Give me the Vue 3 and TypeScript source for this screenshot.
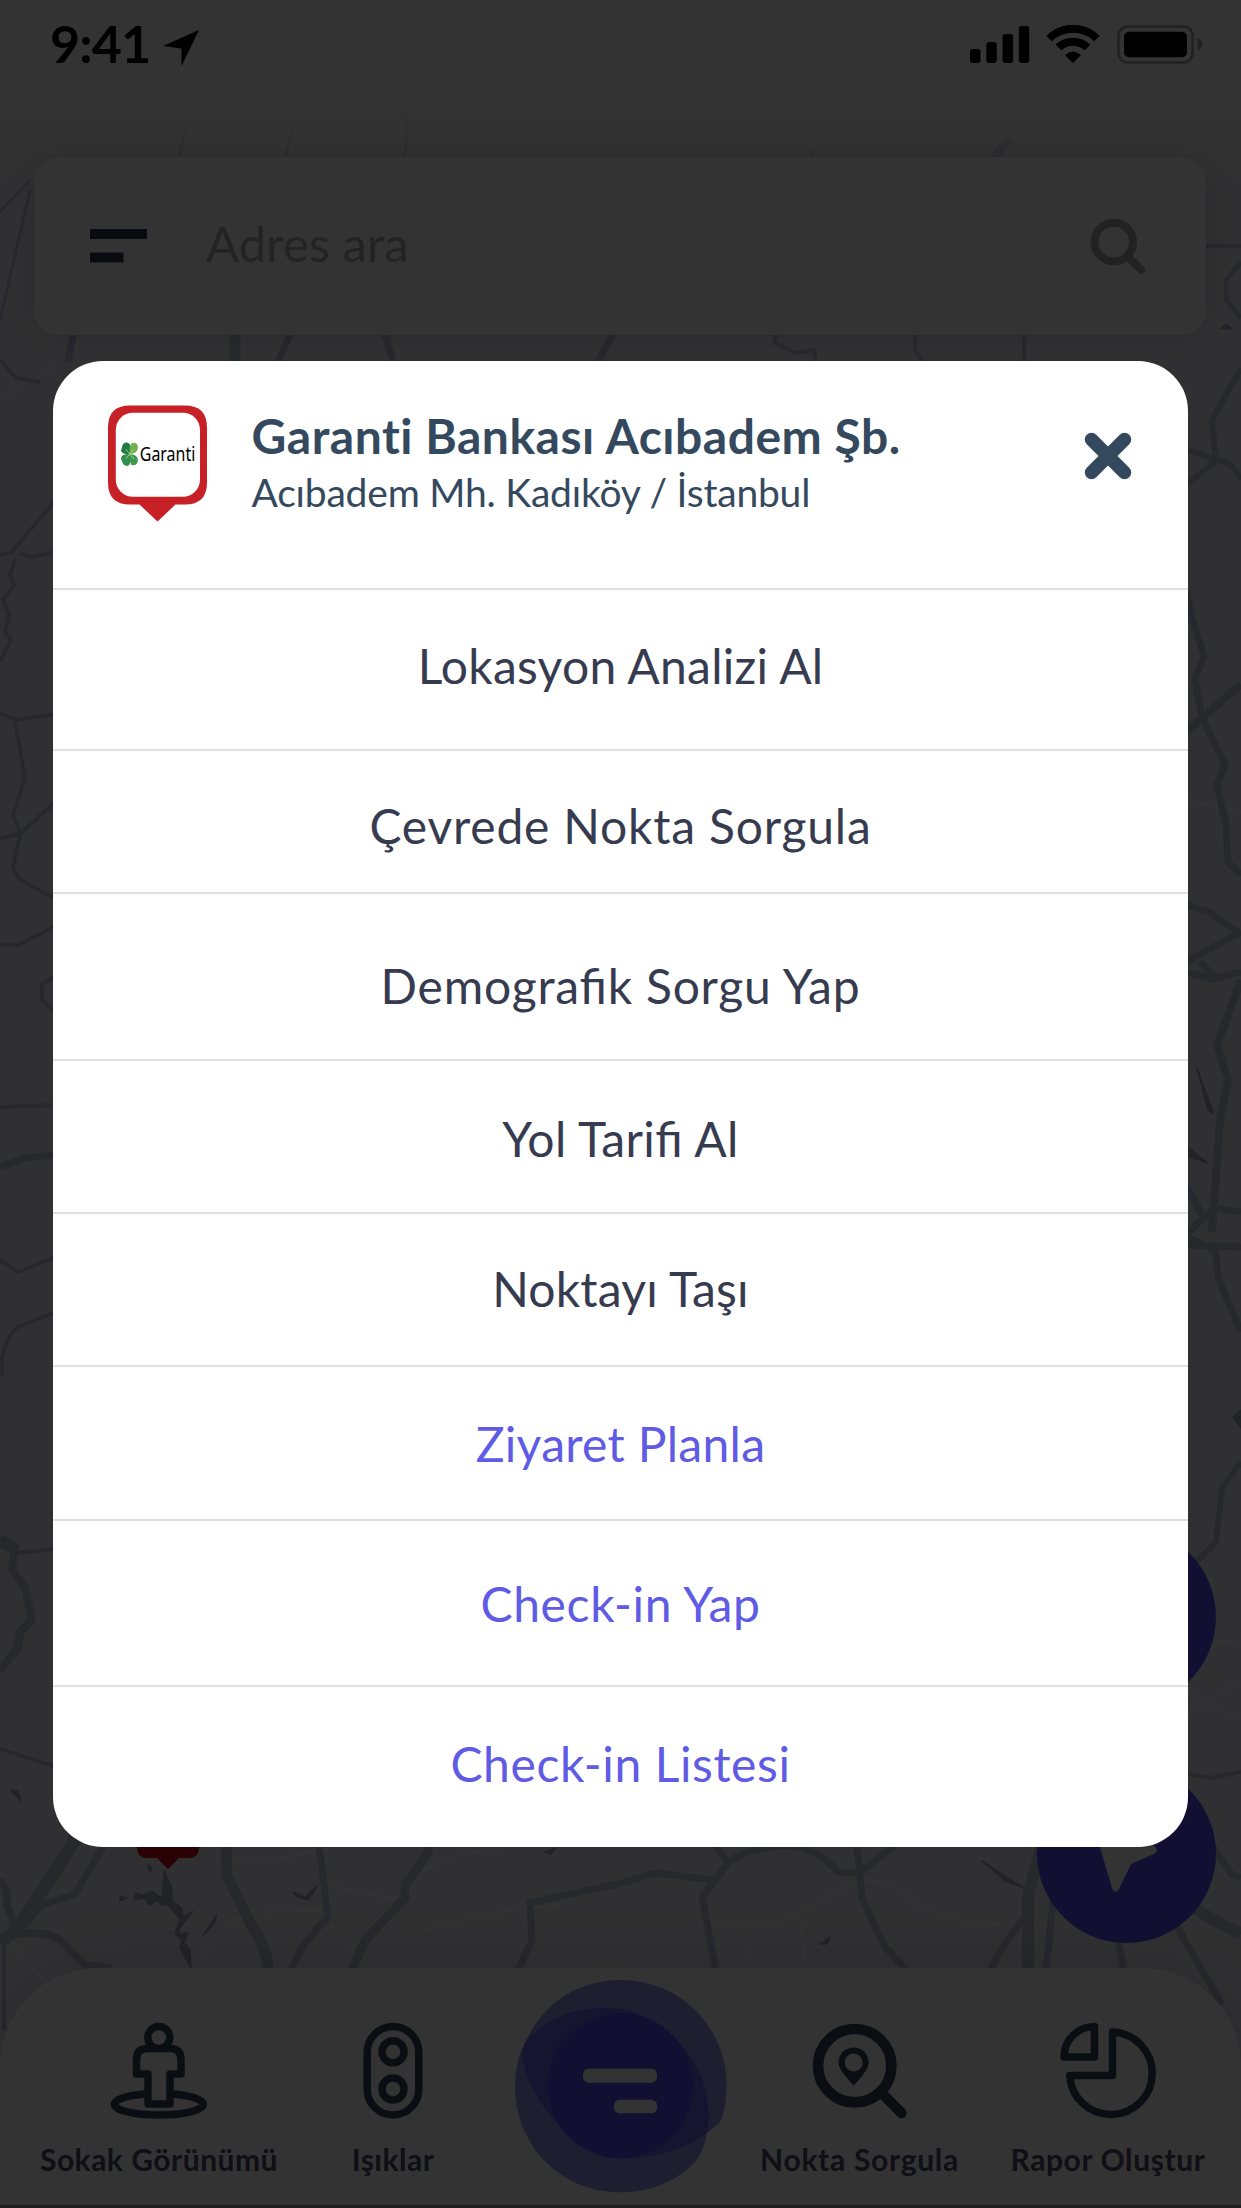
<script setup lang="ts">
interface Action {
  label: string
  height: number
  padTop: number
  spacing: number
  accent?: boolean
}

interface Road {
  d: string
  w: number
}

const actions: Action[] = [
  { label: 'Lokasyon Analizi Al', height: 161, padTop: 46.5, spacing: 0.25 },
  { label: 'Çevrede Nokta Sorgula', height: 143, padTop: 45.5, spacing: 0.8 },
  { label: 'Demografik Sorgu Yap', height: 167, padTop: 62.5, spacing: 0.76 },
  { label: 'Yol Tarifi Al', height: 153, padTop: 48.5, spacing: 0.4 },
  { label: 'Noktayı Taşı', height: 153, padTop: 46, spacing: 0.2 },
  { label: 'Ziyaret Planla', height: 154, padTop: 48, spacing: 0.3, accent: true },
  { label: 'Check-in Yap', height: 166, padTop: 54, spacing: 0.65, accent: true },
  { label: 'Check-in Listesi', height: 162, padTop: 47.5, spacing: 0.6, accent: true },
]

const roads: Road[] = [
  { d: 'M0 555L12 552L56 499M20 553L32 557L56 552', w: 4 },
  { d: 'M16 558L10 575L14 585L3 600L9 615L5 632L11 640L0 662', w: 4 },
  { d: 'M0 713L17 720L56 714M15 722L25 778L13 815L20 832M0 838L20 834L56 801', w: 4 },
  { d: 'M20 835L13 867L20 880L56 899M0 945L18 945L56 926', w: 4 },
  { d: 'M56 975L42 985L42 1000L56 1013M0 1107L56 1105', w: 4 },
  { d: 'M0 1167L25 1158L56 1155', w: 7 },
  { d: 'M0 1260L18 1272L56 1257M2 1377L2 1358Q8 1332 20 1326L56 1312', w: 4 },
  { d: 'M0 1538L15 1547L12 1570L25 1588L32 1620L20 1632L18 1648L0 1670', w: 8 },
  { d: 'M0 1545L15 1553L56 1549M0 1749L56 1767', w: 4 },
  { d: 'M1206 246L1241 246M1241 262L1226 280L1226 300L1241 318', w: 5 },
  { d: 'M1241 368L1212 420L1216 460M1186 449L1216 460Q1232 460 1241 480M1186 485L1216 461', w: 6 },
  { d: 'M1186 590L1192 618L1204 655L1195 680L1202 718L1225 765L1217 785L1226 825L1228 862L1241 875', w: 7 },
  { d: 'M1186 732L1241 684', w: 8 },
  { d: 'M1186 905L1210 912L1241 935M1186 962L1241 932M1200 962L1216 978L1241 972M1186 972L1216 980', w: 7 },
  { d: 'M1241 980L1217 1045L1228 1080L1220 1120L1212 1232', w: 8 },
  { d: 'M1186 1185L1202 1215M1186 1234L1215 1208L1241 1212M1186 1245L1241 1247M1186 1237L1215 1250L1218 1278L1241 1332', w: 7 },
  { d: 'M1241 1462L1222 1488L1216 1542L1196 1562', w: 6 },
  { d: 'M1186 1774L1210 1778L1241 1772', w: 4 },
  { d: 'M74 330L68 362M290 334L278 362M385 334L393 362M613 334L598 362', w: 7 },
  { d: 'M235 334L235 362', w: 11 },
  { d: 'M775 334L775 343L795 353L815 350L815 362M915 334L915 350L924 362M1024 334L1024 362M40 382L16 378L0 360', w: 4 },
  { d: 'M30 190L0 320M188 125L178 158M292 130L285 158M408 110L405 158M812 150L814 158M0 212L30 180', w: 3 },
  { d: 'M995 158Q1002 145 1010 140', w: 9 },
  { d: 'M78 1835L18 1929L0 1942', w: 13 },
  { d: 'M104 1845L75 1894L42 1905L18 1932', w: 7 },
  { d: 'M0 1880Q8 1888 7 1905L16 1930M18 1934Q48 1930 62 1942L85 1965L112 1969', w: 8 },
  { d: 'M4 1935L4 2030', w: 4 },
  { d: 'M226 1845L227 1876L250 1922Q268 1950 268 1970', w: 11 },
  { d: 'M319 1845L324 1885L328 1917Q296 1950 292 1970', w: 7 },
  { d: 'M430 1845Q425 1862 405 1884L405 1898L365 1940L352 1970', w: 9 },
  { d: 'M620 1883L530 1903L532 1940L518 1970', w: 7 },
  { d: 'M612 1886L655 1873L715 1880L728 1862L715 1845M728 1862Q760 1842 800 1847Q820 1852 838 1872L860 1873L894 1846', w: 7 },
  { d: 'M722 1872L702 1897L716 1970M857 1845L862 1898L872 1920L885 1947L907 1970', w: 7 },
  { d: 'M1042 1845L1028 1895L1028 1970', w: 12 },
  { d: 'M1053 1900L1046 1970M1024 1918L1002 1948L990 1970', w: 7 },
  { d: 'M1212 1845L1232 1875L1241 1878M1118 1940L1124 1970M1172 1918L1222 2005', w: 7 },
  { d: 'M1190 1905L1210 1918L1241 1934', w: 12 },
]

const faintRoads =
  'M0 400L56 366M230 1858L280 1858L330 1848M200 1960Q210 1930 255 1910M265 1912L330 1910M330 1886L400 1900M330 1925L358 1955M410 1880Q450 1850 500 1850M400 1940Q480 1910 560 1905M710 1922L780 1922Q840 1890 860 1880Q900 1880 910 1900Q950 1925 1000 1924M800 1920L806 1968M750 1925L750 1968M1186 1645L1241 1640M1186 1690L1241 1720M1186 1716L1241 1680M1186 800L1241 812M10 1940L60 2000'
</script>

<template>
  <div class="screen">
    <svg class="map" viewBox="0 0 1241 2208" aria-hidden="true">
      <defs>
        <linearGradient id="topFade" x1="0" y1="0" x2="0" y2="1">
          <stop offset="0.5" stop-color="#fff" />
          <stop offset="1" stop-color="#fff" stop-opacity="0" />
        </linearGradient>
      </defs>
      <rect width="1241" height="2208" fill="#f0f0f7" />
      <path :d="faintRoads" fill="none" stroke="#fafafa" stroke-width="3" />
      <g fill="none" stroke="#c3c6d6" stroke-linejoin="round">
        <path v-for="(road, i) in roads" :key="i" :d="road.d" :stroke-width="road.w" />
      </g>
      <g fill="#aaadb8" stroke="#aaadb8" stroke-width="1.500" stroke-linejoin="round">
        <path d="M164 1871L172 1888L172 1900L182 1908L183 1917L193 1911L180 1928L178 1934L188 1933L184 1942L190 1950L191 1968L180 1948L182 1940L175 1934L180 1920L168 1905L161 1905L158 1900L150 1905L144 1898L134 1900L135 1893L144 1895L152 1891L162 1898Z" />
        <path d="M120 1896L127 1898L120 1901ZM147 1864L152 1868L150 1872ZM217 1914L215 1922L203 1936ZM293 1892L305 1897L318 1885L308 1900L296 1896ZM544 1852L556 1848L550 1854ZM820 1944L830 1937L827 1944ZM982 1861L1024 1888L1005 1881ZM10 1790L18 1791L21 1801ZM1221 328L1226 324L1232 329ZM1197 1068L1214 1114L1208 1110ZM1186 1146L1208 1163L1190 1157ZM1241 1410L1233 1417L1241 1428Z" />
      </g>
      <rect width="1241" height="190" fill="url(#topFade)" />
      <path d="M137 1810H199V1848Q199 1858 188 1858H179L168 1869L157 1858H148Q137 1858 137 1848Z" fill="#d20a1e" />
      <circle cx="1126" cy="1617" r="90" fill="#5f4bfa" />
      <circle cx="1126.500" cy="1853.500" r="89.500" fill="#5f4bfa" />
      <path d="M1090 1815L1154 1846Q1160 1850 1154 1854L1133 1863Q1131 1864 1130 1866L1119 1889Q1115 1895 1112 1888L1097 1837Z" fill="#fff" />
    </svg>

    <header class="status">
      <div class="clock">
        <span class="time">9:41</span>
        <svg class="arrow" width="38" height="38" viewBox="0 0 38 38"><path d="M37 1L19.500 37V19.500L1 17Z" /></svg>
      </div>
      <div class="indicators">
        <svg width="60" height="39" viewBox="970 25 60 39">
          <rect x="970" y="49" width="10.500" height="14" rx="3" />
          <rect x="986.300" y="42" width="10.500" height="21" rx="3" />
          <rect x="1002.600" y="34" width="10.500" height="29" rx="3" />
          <rect x="1018.800" y="26" width="10.500" height="37" rx="3" />
        </svg>
        <svg class="wifi" width="54" height="39" viewBox="1046 25 54 39">
          <g fill="none" stroke="#000" stroke-width="8">
            <path d="M1049 38.500A34.500 34.500 0 0 1 1097 38.500" />
            <path d="M1058.500 47.500A21 21 0 0 1 1087.500 47.500" />
          </g>
          <path d="M1065 55Q1073 48 1081 55L1073 63Z" />
        </svg>
        <svg width="86" height="39" viewBox="1117 25 86 39">
          <rect x="1118.500" y="26.500" width="74" height="36" rx="9" fill="none" stroke="#a0a0a0" stroke-width="2.500" />
          <rect x="1124" y="31.700" width="63" height="25.500" rx="5" />
          <path d="M1197.500 38Q1202 40 1202 44.500Q1202 49 1197.500 51Z" fill="#a0a0a0" />
        </svg>
      </div>
    </header>

    <div class="search">
      <svg class="burger" width="57" height="34" viewBox="0 0 57 34"><path d="M0 0H57V10H0ZM0 23.500H33.500V33.500H0Z" /></svg>
      <span class="placeholder">Adres ara</span>
      <svg class="lens" width="56" height="56" viewBox="1090 218 56 56" fill="none" stroke="#aaa">
        <circle cx="1113.700" cy="242" r="19.300" stroke-width="8" />
        <path d="M1128.500 257.500L1141 269.500" stroke-width="8" stroke-linecap="round" />
      </svg>
    </div>

    <nav class="tabs">
      <div class="tab">
        <svg width="98" height="97" viewBox="110.500 2021.500 98 97" fill="none" stroke="#34495e" stroke-width="7.500" stroke-linejoin="round">
          <ellipse cx="159.300" cy="2103.700" rx="44.500" ry="10.800" />
          <path d="M137 2073.500V2059Q137 2048 148 2048H170.500Q181.500 2048 181.500 2059V2073.500H170.500V2103.500H148.500V2073.500Z" fill="#fff" />
          <circle cx="159.300" cy="2037" r="11" fill="#fff" />
        </svg>
        <span class="tab-label" style="letter-spacing: 0.5px">Sokak Görünümü</span>
      </div>
      <div class="tab">
        <svg width="60" height="97" viewBox="362.500 2021.500 60 97" fill="none" stroke="#34495e" stroke-width="7.500">
          <rect x="366.700" y="2026" width="51.600" height="88.500" rx="25.800" />
          <circle cx="392.500" cy="2051.300" r="11" />
          <circle cx="392.500" cy="2088.500" r="11" />
        </svg>
        <span class="tab-label" style="letter-spacing: 0.5px">Işıklar</span>
      </div>
      <div class="tab fab">
        <svg width="240" height="240" viewBox="0 0 720 720">
          <g fill="#5a4ce6" fill-opacity="0.62">
            <path d="M80 225C160 150 230 128 310 128C420 128 500 180 560 260C610 320 640 420 620 510C612 545 600 572 588 588C530 650 450 682 362 682C180 682 45 540 45 363C45 310 58 262 80 225Z" />
            <path d="M65 260C110 130 220 45 362 45C540 45 680 185 680 363C680 400 674 440 660 472C630 500 600 520 560 540C500 567 440 580 362 580C280 580 220 530 180 485C120 420 75 350 65 260Z" />
          </g>
          <circle cx="361" cy="362" r="218" fill="#5d4bfa" />
          <g fill="#fff">
            <rect x="249" y="311" width="222" height="42" rx="17" />
            <rect x="342" y="404" width="129" height="41" rx="17" />
          </g>
        </svg>
      </div>
      <div class="tab">
        <svg width="96" height="97" viewBox="812 2021.500 96 97" fill="none" stroke="#34495e">
          <circle cx="854.700" cy="2065.200" r="36.700" stroke-width="10.700" />
          <path d="M883 2094L901.500 2112.500" stroke-width="10.500" stroke-linecap="round" />
          <path fill="#34495e" stroke="none" fill-rule="evenodd" d="M853.700 2047C845 2047 838.600 2053.500 838.600 2062C838.600 2069 846 2076 853.700 2085.300C861.500 2076 868.700 2069 868.700 2062C868.700 2053.500 862.500 2047 853.700 2047ZM853.700 2053A9 9 0 1 1 853.700 2071A9 9 0 1 1 853.700 2053Z" />
        </svg>
        <span class="tab-label" style="letter-spacing: 0.7px">Nokta Sorgula</span>
      </div>
      <div class="tab last">
        <svg width="96" height="97" viewBox="1060 2021.500 96 97" fill="none" stroke="#34495e" stroke-width="7.500" stroke-linejoin="round">
          <path d="M1064 2056.500H1094.500V2026A30.500 30.500 0 0 0 1064 2056.500Z" />
          <path d="M1112.500 2075V2031.500A41.300 41.300 0 1 1 1069.700 2075Z" />
        </svg>
        <span class="tab-label" style="letter-spacing: 0.6px">Rapor Oluştur</span>
      </div>
    </nav>
    <div class="edge"></div>

    <div class="scrim"></div>

    <section class="modal">
      <div class="modal-head">
        <svg class="pin" width="99" height="117" viewBox="108 404.500 99 117">
          <path d="M130 405H185Q207 405 207 427V482Q207 504 185 504H175.500L157.500 521L139.500 504H130Q108 504 108 482V427Q108 405 130 405Z" fill="#c72026" />
          <rect x="115.800" y="412.300" width="84.200" height="84" rx="17" fill="#fff" />
          <path d="M129.500 453.500C121 454 120 450 122 447.500C122 442 127 440.500 129.500 443.500Q131.500 447 129.500 453.500Z" fill="#1d7a45" />
          <path d="M129.500 453.500C121 453 120 458 122 460.500C122.500 465 127 467 129.500 464Q131.500 460 129.500 453.500Z" fill="#2f8f4c" />
          <path d="M130 453.500Q128.500 446 131.500 443C136 440.500 139 445 137.500 449Q136 453 130 453.500Z" fill="#6fb04b" />
          <path d="M130 453.500Q129 461 131.500 464.500C136 466 139 461.500 137.500 457.500Q136 454 130 453.500Z" fill="#3f9a50" />
          <path d="M125.500 448.500L134 458.500M134 448.500L125.500 458.500" stroke="#cfe39a" stroke-width="0.700" />
          <text x="139.800" y="460" font-size="19.500" textLength="55.500" lengthAdjust="spacingAndGlyphs" class="brand">Garanti</text>
        </svg>
        <div class="heading">
          <h1>Garanti Bankası Acıbadem Şb.</h1>
          <p>Acıbadem Mh. Kadıköy / İstanbul</p>
        </div>
        <svg class="close" width="48" height="48" viewBox="0 0 48 48"><path d="M7.500 7.500L40.500 40.500M40.500 7.500L7.500 40.500" stroke="#34495e" stroke-width="13.500" stroke-linecap="round" /></svg>
      </div>
      <div
        v-for="a in actions"
        :key="a.label"
        class="row"
        :class="{ accent: a.accent }"
        :style="{ height: a.height + 'px', paddingTop: a.padTop + 'px', letterSpacing: a.spacing + 'px' }"
      >{{ a.label }}</div>
    </section>
  </div>
</template>

<style>
body {
  margin: 0;
}
</style>

<style scoped>
.screen {
  position: relative;
  width: 1241px;
  height: 2208px;
  overflow: hidden;
  display: flex;
  flex-direction: column;
  font-family: Lato, 'Noto Sans', sans-serif;
}
.screen svg {
  display: block;
  flex: none;
}
.map {
  position: absolute;
  top: 0;
  left: 0;
  width: 1241px;
  height: 2208px;
}
.status {
  position: relative;
  display: flex;
  justify-content: space-between;
  box-sizing: border-box;
  height: 157px;
  padding: 13px 38px 0 50px;
  color: #000;
}
.clock {
  display: flex;
  height: 62px;
}
.time {
  font-size: 52px;
  font-weight: 700;
  line-height: 61px;
  letter-spacing: -0.9px;
}
.arrow {
  margin: 16px 0 0 12px;
}
.indicators {
  display: flex;
  padding-top: 12px;
}
.wifi {
  margin: 0 17px 0 16px;
}
.search {
  position: relative;
  display: flex;
  align-items: center;
  box-sizing: border-box;
  height: 178px;
  margin: 0 35px 0 34px;
  padding: 0 60px 0 56px;
  border-radius: 26px;
  background: #fff;
  box-shadow: 0 0 26px rgba(0, 0, 0, 0.13);
}
.burger {
  fill: #34384f;
}
.placeholder {
  flex: 1;
  margin: -6px 0 0 59px;
  font-size: 49px;
  line-height: 58px;
  color: #b0b0b0;
}
.tabs {
  position: relative;
  display: grid;
  grid-template-columns: 318px 150px 305px 173px 295px;
  box-sizing: border-box;
  height: 237px;
  margin-top: auto;
  border-radius: 98px 98px 0 0;
  background: #fff;
  box-shadow: 0 0 60px rgba(30, 32, 60, 0.16);
}
.tab {
  display: flex;
  flex-direction: column;
  align-items: center;
  padding-top: 53.5px;
}
.fab {
  padding-top: 0;
  margin: -3px 1px 0 -1px;
}
.last {
  padding-left: 29px;
}
.tab-label {
  margin-top: 22px;
  font-size: 30px;
  font-weight: 700;
  line-height: 36px;
  white-space: nowrap;
  color: #4a4e68;
}
.edge {
  position: relative;
  height: 3px;
  background: #9a9ca8;
}
.scrim {
  position: absolute;
  inset: 0;
  background: rgba(0, 0, 0, 0.8);
}
.modal {
  position: absolute;
  top: 361px;
  left: 53px;
  width: 1135px;
  height: 1486px;
  overflow: hidden;
  border-radius: 50px;
  background: #fff;
}
.modal-head {
  display: flex;
  box-sizing: border-box;
  height: 227px;
  padding: 43.5px 56px 0 55px;
}
.heading {
  flex: 1;
  margin: 3px 0 0 44.5px;
  color: #34495e;
}
h1 {
  margin: 0;
  font-size: 48px;
  font-weight: 700;
  line-height: 56px;
  letter-spacing: 0.52px;
  white-space: nowrap;
}
p {
  margin: 5.5px 0 0;
  font-size: 39px;
  line-height: 46px;
  letter-spacing: -0.2px;
  white-space: nowrap;
}
.close {
  margin-top: 27.5px;
}
.brand {
  font-family: 'Noto Sans', 'Open Sans', sans-serif;
}
.row {
  box-sizing: border-box;
  border-top: 2px solid #e0e0e0;
  font-size: 48px;
  line-height: 58px;
  text-align: center;
  font-feature-settings: 'liga' 1;
  color: #373b50;
}
.row.accent {
  color: #5f5be4;
}
</style>
